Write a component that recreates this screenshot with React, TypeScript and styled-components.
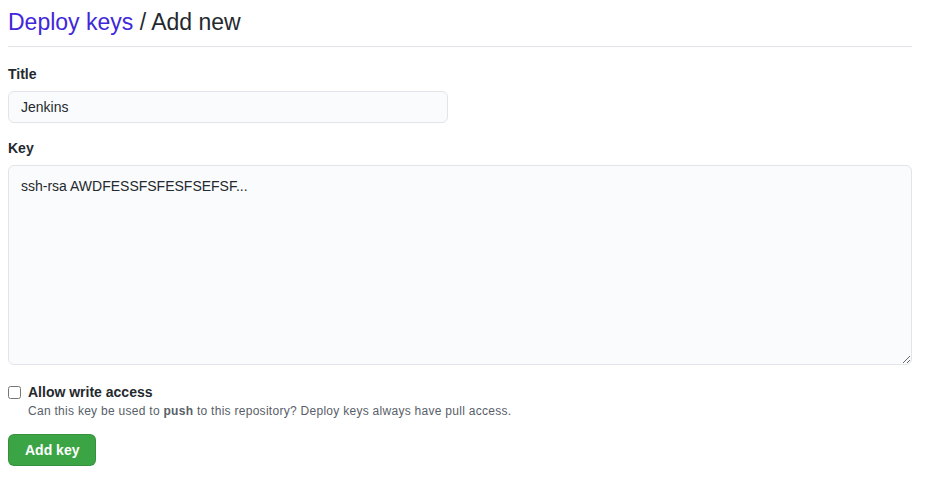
import { FunctionComponent } from 'react'
import styled, { createGlobalStyle } from 'styled-components'

const GlobalStyle = createGlobalStyle`
    body {
        margin: 0;
        background: #fff;
        color: #24292e;
        font-family: 'Liberation Sans', Arial, sans-serif;
        font-size: 14px;
    }
`

const Page = styled.div`
    width: 904px;
    padding: 0 8px;
`

const Heading = styled.h2`
    margin: 0;
    padding: 8px 0 9px;
    border-bottom: 1px solid #e1e4e8;
    font-size: 23px;
    font-weight: 400;
    line-height: 29px;
    color: #24292e;
`

const HeadingLink = styled.a`
    color: #4027da;
    text-decoration: none;
`

const Form = styled.form`
    display: flex;
    flex-direction: column;
`

const Field = styled.div<{ $first?: boolean }>`
    display: flex;
    flex-direction: column;
    margin-top: ${({ $first }) => ($first ? '19px' : '17px')};
`

const Label = styled.label`
    margin-bottom: 8px;
    font-size: 14px;
    font-weight: 700;
    line-height: 17px;
`

const Input = styled.input`
    box-sizing: border-box;
    width: 440px;
    height: 32px;
    padding: 5px 12px;
    border: 1px solid #e1e4e8;
    border-radius: 6px;
    background: #fafbfc;
    color: #24292e;
    font-family: inherit;
    font-size: 14px;
    outline: none;
`

const TextArea = styled.textarea`
    box-sizing: border-box;
    width: 904px;
    height: 200px;
    padding: 10px 12px;
    border: 1px solid #e1e4e8;
    border-radius: 6px;
    background: #fafbfc;
    color: #24292e;
    font-family: inherit;
    font-size: 14px;
    line-height: 20px;
    resize: vertical;
    outline: none;
`

const CheckRow = styled.div`
    display: flex;
    align-items: flex-start;
    gap: 7px;
    margin-top: 19px;
`

const CheckBox = styled.input`
    width: 13px;
    height: 13px;
    margin: 2px 0 0;
`

const CheckText = styled.div`
    display: flex;
    flex-direction: column;
`

const CheckLabel = styled.label`
    font-size: 14px;
    font-weight: 700;
    line-height: 17px;
`

const Note = styled.p`
    margin: 3px 0 0;
    color: #586069;
    font-size: 12px;
    line-height: 15px;
    letter-spacing: 0.28px;
`

const Button = styled.button`
    align-self: flex-start;
    height: 32px;
    margin-top: 15px;
    padding: 0 16px;
    border: 1px solid rgba(27, 31, 35, 0.15);
    border-radius: 6px;
    background: #3ba545;
    color: #fff;
    font-family: inherit;
    font-size: 14px;
    font-weight: 700;
    line-height: 20px;
    cursor: pointer;
`

const App: FunctionComponent = () => (
    <Page>
        <GlobalStyle />
        <Heading>
            <HeadingLink href="#">Deploy keys</HeadingLink> / Add new
        </Heading>
        <Form onSubmit={(e) => e.preventDefault()}>
            <Field $first>
                <Label htmlFor="title">Title</Label>
                <Input id="title" defaultValue="Jenkins" />
            </Field>
            <Field>
                <Label htmlFor="key">Key</Label>
                <TextArea id="key" defaultValue="ssh-rsa AWDFESSFSFESFSEFSF..." />
            </Field>
            <CheckRow>
                <CheckBox type="checkbox" id="write" />
                <CheckText>
                    <CheckLabel htmlFor="write">Allow write access</CheckLabel>
                    <Note>
                        Can this key be used to <strong>push</strong> to this repository? Deploy keys always have
                        pull access.
                    </Note>
                </CheckText>
            </CheckRow>
            <Button type="submit">Add key</Button>
        </Form>
    </Page>
)

export default App
